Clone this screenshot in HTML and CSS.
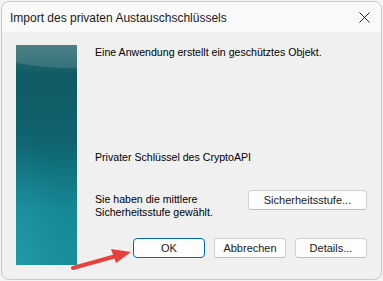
FILE: index.html
```html
<!doctype html>
<html lang="de">
<head>
<meta charset="utf-8">
<title>Import des privaten Austauschschlüssels</title>
<link rel="stylesheet" href="styles.css">
</head>
<body>

	<div class="window">

		<div class="titlebar">
			<span class="title">Import des privaten Austauschschlüssels</span>
			<svg class="close" width="11" height="11" viewBox="0 0 11 11"><path d="M0.5 0.5 L10.5 10.5 M10.5 0.5 L0.5 10.5" stroke="#1a1a1a" stroke-width="1" fill="none"/></svg>
		</div>

		<div class="dlgbody">

			<div class="banner"></div>

			<div class="content">

				<p class="msg">Eine Anwendung erstellt ein geschütztes Objekt.</p>

				<p class="msg keyname">Privater Schlüssel des CryptoAPI</p>

				<div class="levelrow">
					<p class="msg level">Sie haben die mittlere<br>Sicherheitsstufe gewählt.</p>
					<button class="btn wide">Sicherheitsstufe...</button>
				</div>

				<div class="buttons">
					<button class="btn default">OK</button>
					<button class="btn">Abbrechen</button>
					<button class="btn">Details...</button>
				</div>

			</div>

		</div>

		<!-- annotation arrow pointing at OK -->
		<svg class="arrow" width="383" height="281" viewBox="0 0 383 281">
			<line x1="73" y1="268" x2="116" y2="256" stroke="#e8403d" stroke-width="4" stroke-linecap="round"/>
			<polygon points="131,252 111,249 116,263" fill="#e8403d"/>
		</svg>

	</div>

</body>
</html>
```

FILE: styles.css
```css
/* dialog colours */

	html { --dlg-back: #f0f0f0; --title-back: #f9f9f9; --edge: #c9c9c9; --accent: #0067c0; }

	body { background-color: #f4f4f4; font: 10.6px "Liberation Sans", Arial, sans-serif; margin: 0; color: #000; }

	.window { background-color: var( --dlg-back ); border: 1px solid var( --edge ); border-radius: 8px; box-sizing: border-box;
		display: flex; flex-direction: column; height: 279px; margin: 1px 0 0 1px; overflow: hidden; width: 381px; }

	.titlebar { align-items: center; background-color: var( --title-back ); display: flex; flex: 0 0 30px; justify-content: space-between;
		padding: 0 11px 0 8px; }
	.title { font-size: 12px; color: #1b1b1b; padding-top: 1px; }
	.close { display: block; margin-top: 1px; }

	.dlgbody { display: flex; flex: 1; gap: 18px; padding: 13px 14px 0 14px; }

	.banner { flex: 0 0 61px; height: 220px;
		background:
			radial-gradient( ellipse 150px 36px at 70px -4px, rgba( 255, 255, 255, 0.12 ) 0 75%, transparent 78% ),
			radial-gradient( ellipse 60px 160px at 0px 210px, rgba( 60, 190, 200, 0.22 ), transparent 80% ),
			linear-gradient( 180deg, #356d74 0%, #0f5a63 14%, #0f6470 45%, #168896 75%, #1a8f9c 100% ); }

	.content { display: flex; flex: 1; flex-direction: column; }

	.msg { line-height: 13px; margin: 0; }
	.content > .msg:first-child { margin-top: 1px; }
	.keyname { margin-top: 92px; }

	.levelrow { align-items: flex-start; display: flex; justify-content: space-between; margin-top: 26px; }
	.level { margin-top: 3px; }

	.buttons { display: flex; gap: 9px; justify-content: flex-end; margin-top: 19px; }

	.btn { background-color: #fdfdfd; border: 1px solid #d1d1d1; border-bottom-color: #bcbcbc; border-radius: 4px; box-sizing: border-box;
		color: #1a1a1a; font: 11px "Liberation Sans", Arial, sans-serif; height: 20px; padding: 0; width: 72px; }
	.btn.wide { width: 119px; }
	.btn.default { border-color: var( --accent ); }

	.arrow { left: 0; pointer-events: none; position: absolute; top: 0; }
```
